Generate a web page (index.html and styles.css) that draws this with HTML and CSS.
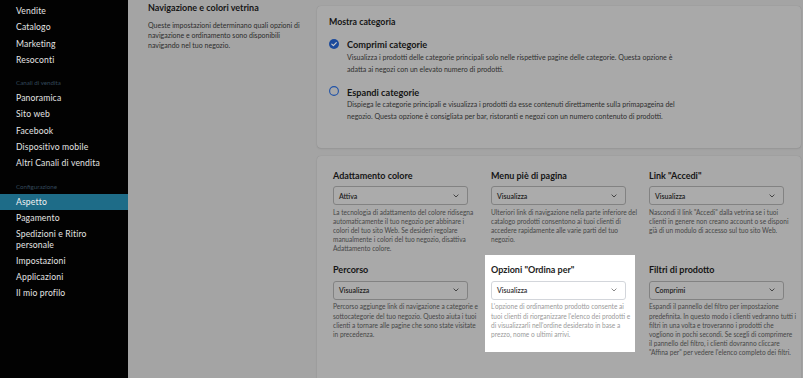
FILE: index.html
```html
<!DOCTYPE html>
<html lang="it">
<head>
<meta charset="utf-8">
<title>Aspetto</title>
<link rel="stylesheet" href="styles.css">
</head>
<body>
<div class="app">
  <aside class="sidebar">
    <nav class="nav">
      <a class="item">Vendite</a>
      <a class="item">Catalogo</a>
      <a class="item">Marketing</a>
      <a class="item">Resoconti</a>
      <div class="section">Canali di vendita</div>
      <a class="item">Panoramica</a>
      <a class="item">Sito web</a>
      <a class="item">Facebook</a>
      <a class="item">Dispositivo mobile</a>
      <a class="item">Altri Canali di vendita</a>
      <div class="section">Configurazione</div>
      <a class="item active">Aspetto</a>
      <a class="item">Pagamento</a>
      <a class="item">Spedizioni e Ritiro<br>personale</a>
      <a class="item">Impostazioni</a>
      <a class="item">Applicazioni</a>
      <a class="item">Il mio profilo</a>
    </nav>
  </aside>
  <main class="main">
    <section class="intro">
      <h2 class="intro-title">Navigazione e colori vetrina</h2>
      <p class="intro-text">Queste impostazioni determinano quali opzioni di navigazione e ordinamento sono disponibili navigando nel tuo negozio.</p>
    </section>
    <div class="cards">
      <div class="card card-cat">
        <h3 class="card-title">Mostra categoria</h3>
        <div class="option">
          <span class="radio checked"><svg viewBox="0 0 10 10" width="10" height="10"><circle cx="5" cy="5" r="5" fill="#1b4a9c"/><path d="M2.8 5.1 L4.4 6.6 L7.3 3.6" fill="none" stroke="#c9c9c9" stroke-width="1.2" stroke-linecap="round" stroke-linejoin="round"/></svg></span>
          <div class="opt-body">
            <div class="opt-title">Comprimi categorie</div>
            <p class="opt-text">Visualizza i prodotti delle categorie principali solo nelle rispettive pagine delle categorie. Questa opzione è<br>adatta ai negozi con un elevato numero di prodotti.</p>
          </div>
        </div>
        <div class="option">
          <span class="radio"><svg viewBox="0 0 10 10" width="10" height="10"><circle cx="5" cy="5" r="4.4" fill="none" stroke="#1f52a8" stroke-width="1.1"/></svg></span>
          <div class="opt-body">
            <div class="opt-title">Espandi categorie</div>
            <p class="opt-text">Dispiega le categorie principali e visualizza i prodotti da esse contenuti direttamente sulla primapageina del<br>negozio. Questa opzione è consigliata per bar, ristoranti e negozi con un numero contenuto di prodotti.</p>
          </div>
        </div>
      </div>
      <div class="card card-grid">
        <div class="field">
          <div class="field-label">Adattamento colore</div>
          <div class="select"><span>Attiva</span><svg class="chev" viewBox="0 0 6 4" width="6" height="4"><path d="M0.6 0.6 L3 3 L5.4 0.6" fill="none" stroke="currentColor" stroke-width="1"/></svg></div>
          <p class="field-text">La tecnologia di adattamento del colore ridisegna<br>automaticamente il tuo negozio per abbinare i<br>colori del tuo sito Web. Se desideri regolare<br>manualmente i colori del tuo negozio, disattiva<br>Adattamento colore.</p>
        </div>
        <div class="field">
          <div class="field-label">Menu piè di pagina</div>
          <div class="select"><span>Visualizza</span><svg class="chev" viewBox="0 0 6 4" width="6" height="4"><path d="M0.6 0.6 L3 3 L5.4 0.6" fill="none" stroke="currentColor" stroke-width="1"/></svg></div>
          <p class="field-text">Ulteriori link di navigazione nella parte inferiore del<br>catalogo prodotti consentono ai tuoi clienti di<br>accedere rapidamente alle varie parti del tuo<br>negozio.</p>
        </div>
        <div class="field">
          <div class="field-label">Link "Accedi"</div>
          <div class="select"><span>Visualizza</span><svg class="chev" viewBox="0 0 6 4" width="6" height="4"><path d="M0.6 0.6 L3 3 L5.4 0.6" fill="none" stroke="currentColor" stroke-width="1"/></svg></div>
          <p class="field-text">Nascondi il link "Accedi" dalla vetrina se i tuoi<br>clienti in genere non creano account o se disponi<br>già di un modulo di accesso sul tuo sito Web.</p>
        </div>
        <div class="field">
          <div class="field-label">Percorso</div>
          <div class="select"><span>Visualizza</span><svg class="chev" viewBox="0 0 6 4" width="6" height="4"><path d="M0.6 0.6 L3 3 L5.4 0.6" fill="none" stroke="currentColor" stroke-width="1"/></svg></div>
          <p class="field-text">Percorso aggiunge link di navigazione a categorie e<br>sottocategorie del tuo negozio. Questo aiuta i tuoi<br>clienti a tornare alle pagine che sono state visitate<br>in precedenza.</p>
        </div>
        <div class="field spot">
          <div class="field-label">Opzioni "Ordina per"</div>
          <div class="select"><span>Visualizza</span><svg class="chev" viewBox="0 0 6 4" width="6" height="4"><path d="M0.6 0.6 L3 3 L5.4 0.6" fill="none" stroke="currentColor" stroke-width="1"/></svg></div>
          <p class="field-text">L'opzione di ordinamento prodotto consente ai<br>tuoi clienti di riorganizzare l'elenco dei prodotti e<br>di visualizzarli nell'ordine desiderato in base a<br>prezzo, nome o ultimi arrivi.</p>
        </div>
        <div class="field">
          <div class="field-label">Filtri di prodotto</div>
          <div class="select"><span>Comprimi</span><svg class="chev" viewBox="0 0 6 4" width="6" height="4"><path d="M0.6 0.6 L3 3 L5.4 0.6" fill="none" stroke="currentColor" stroke-width="1"/></svg></div>
          <p class="field-text">Espandi il pannello del filtro per impostazione<br>predefinita. In questo modo i clienti vedranno tutti i<br>filtri in una volta e troveranno i prodotti che<br>vogliono in pochi secondi. Se scegli di comprimere<br>il pannello del filtro, i clienti dovranno cliccare<br>"Affina per" per vedere l'elenco completo dei filtri.</p>
        </div>
      </div>
    </div>
  </main>
</div>
</body>
</html>
```

FILE: styles.css
```css
* { box-sizing: border-box; }
html, body { margin: 0; padding: 0; }
body {
  width: 803px;
  height: 378px;
  overflow: hidden;
  font-family: Lato, "Open Sans", "Liberation Sans", sans-serif;
  background: #a4a4a4;
}
.app {
  display: flex;
  height: 378px;
}
.sidebar {
  width: 128px;
  flex: none;
  background: #020202;
  padding-top: 3px;
}
.nav {
  display: flex;
  flex-direction: column;
}
.item {
  display: block;
  padding: 3px 0 3px 16px;
  line-height: 10.3px;
  font-size: 8.6px;
  font-weight: 400;
  letter-spacing: 0.15px;
  color: #e4e4e4;
  white-space: nowrap;
}
.item.active {
  background: #1e6c88;
  color: #f2f2f2;
}
.section {
  padding: 10px 0 2px 16px;
  line-height: 10px;
  font-size: 6.2px;
  color: #34495b;
}
.main {
  flex: 1;
  display: flex;
  align-items: flex-start;
  padding-left: 20px;
  padding-right: 2px;
}
.intro {
  width: 169px;
  flex: none;
  margin-top: 2px;
  padding-right: 8px;
}
.intro-title {
  margin: 0;
  font-size: 9px;
  line-height: 11px;
  font-weight: 700;
  color: #161616;
}
.intro-text {
  margin: 6.5px 0 0;
  font-size: 7px;
  line-height: 10px;
  color: #2c2c2c;
}
.cards {
  flex: 1;
  display: flex;
  flex-direction: column;
  gap: 8px;
  margin-top: 6px;
}
.card {
  background: #a9a9a9;
  border-radius: 4px;
  box-shadow: 0 0 1px rgba(0,0,0,0.18), 0 1px 2px rgba(0,0,0,0.08);
}
.card-cat {
  height: 142px;
  padding: 9.5px 12px 0 12px;
}
.card-title {
  margin: 0;
  font-size: 8.8px;
  line-height: 11px;
  font-weight: 700;
  color: #151515;
}
.option {
  display: flex;
  gap: 8px;
  margin-top: 12px;
}
.option + .option { margin-top: 10.5px; }
.radio {
  width: 10px;
  height: 10px;
  flex: none;
  display: block;
}
.radio svg { display: block; }
.opt-title {
  font-size: 9.2px;
  line-height: 11px;
  font-weight: 700;
  color: #151515;
  margin-top: 0.5px;
}
.opt-text {
  margin: 1.5px 0 0;
  font-size: 7.05px;
  line-height: 12px;
  color: #2f2f2f;
  white-space: nowrap;
}
.card-grid {
  display: grid;
  grid-template-columns: repeat(3, 135px);
  column-gap: 23px;
  row-gap: 11.5px;
  padding: 13.5px 16px 30px 16px;
}
.field {
  display: flex;
  flex-direction: column;
  align-self: start;
}
.field-label {
  font-size: 9px;
  line-height: 11px;
  font-weight: 700;
  color: #151515;
  white-space: nowrap;
}
.select {
  margin-top: 5.5px;
  height: 19px;
  border: 1px solid #828282;
  border-radius: 3px;
  background: #ababab;
  display: flex;
  align-items: center;
  justify-content: space-between;
  padding: 0 8px 0 5px;
  font-size: 7px;
  font-weight: 600;
  color: #1e1e1e;
}
.chev { color: #444; display: block; }
.field-text {
  margin: 2.5px 0 0;
  font-size: 6.55px;
  line-height: 9.1px;
  color: #474747;
  white-space: nowrap;
}
.field.spot {
  background: #ffffff;
  margin: -9.5px -9px -13px -6px;
  padding: 9.5px 9px 13px 6px;
}
.spot .field-label { color: #222; }
.spot .select {
  background: #fff;
  border-color: #d3d6db;
  color: #333;
}
.spot .chev { color: #8a8a8a; }
.spot .field-text { color: #9a9a9a; }
```
